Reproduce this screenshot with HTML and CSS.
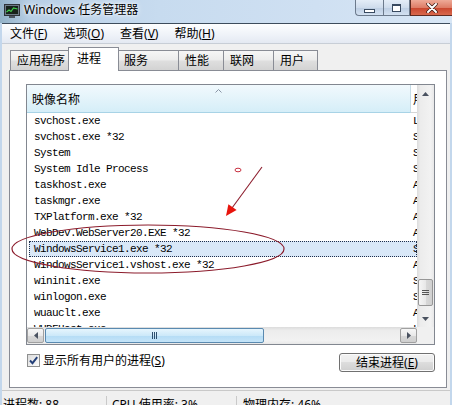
FILE: index.html
```html
<!DOCTYPE html>
<html lang="zh-CN">
<head>
  <meta charset="UTF-8" />
  <meta name="viewport" content="width=device-width, initial-scale=1.0">
  <title>Windows 任务管理器</title>
  <link rel="stylesheet" href="styles.css">
</head>
<body>
  <div class="window">
    <div class="titlebar">
      <svg class="app-icon" width="16" height="14" viewBox="0 0 16 14">
        <rect x="0.5" y="0.5" width="15" height="11" fill="#6d7a86" stroke="#2e3338"/>
        <rect x="2" y="2" width="12" height="8" fill="#17221a"/>
        <polyline points="2.5,8 5,6 7,7.5 9.5,4 13.5,5" fill="none" stroke="#3fd04a" stroke-width="1.2"/>
        <rect x="5" y="12" width="6" height="2" fill="#4b5560"/>
      </svg>
      <span class="title">Windows 任务管理器</span>
      <div class="caption-buttons">
        <div class="cap-btn cap-min"><span class="min-bar"></span></div>
        <div class="cap-btn cap-max"><span class="max-box"></span></div>
        <div class="cap-btn cap-close">
          <svg width="12" height="10" viewBox="0 0 12 10">
            <path d="M2 1 L10 9 M10 1 L2 9" stroke="#3a1a14" stroke-width="3.4" stroke-linecap="round"/>
            <path d="M2 1 L10 9 M10 1 L2 9" stroke="#fff" stroke-width="2" stroke-linecap="round"/>
          </svg>
        </div>
      </div>
    </div>

    <div class="client">
      <div class="menubar">
        <span class="menu-item">文件(<u>F</u>)</span>
        <span class="menu-item">选项(<u>O</u>)</span>
        <span class="menu-item">查看(<u>V</u>)</span>
        <span class="menu-item">帮助(<u>H</u>)</span>
      </div>

      <div class="tabs">
        <div class="tab tab-apps">应用程序</div>
        <div class="tab tab-proc active">进程</div>
        <div class="tab tab-svc">服务</div>
        <div class="tab tab-perf">性能</div>
        <div class="tab tab-net">联网</div>
        <div class="tab tab-user">用户</div>
      </div>

      <div class="tab-panel">
        <div class="listview">
          <div class="lv-main">
            <div class="lv-header">
              <div class="hd-col hd-name">
                <svg class="sort-arrow" width="7" height="4" viewBox="0 0 7 4">
                  <polyline points="0.5,3.5 3.5,0.5 6.5,3.5" fill="none" stroke="#8a96a6" stroke-width="1"/>
                </svg>
                <span class="hd-text">映像名称</span>
              </div>
              <div class="hd-col hd-user">用户名</div>
            </div>
            <div class="lv-rows">
              <div class="row"><span class="c-name">svchost.exe</span><span class="c-user">LOCAL SERVICE</span></div>
              <div class="row"><span class="c-name">svchost.exe *32</span><span class="c-user">SYSTEM</span></div>
              <div class="row"><span class="c-name">System</span><span class="c-user">SYSTEM</span></div>
              <div class="row"><span class="c-name">System Idle Process</span><span class="c-user">SYSTEM</span></div>
              <div class="row"><span class="c-name">taskhost.exe</span><span class="c-user">Administrator</span></div>
              <div class="row"><span class="c-name">taskmgr.exe</span><span class="c-user">Administrator</span></div>
              <div class="row"><span class="c-name">TXPlatform.exe *32</span><span class="c-user">Administrator</span></div>
              <div class="row"><span class="c-name">WebDev.WebServer20.EXE *32</span><span class="c-user">Administrator</span></div>
              <div class="row selected"><span class="c-name">WindowsService1.exe *32</span><span class="c-user">SYSTEM</span></div>
              <div class="row"><span class="c-name">WindowsService1.vshost.exe *32</span><span class="c-user">Administrator</span></div>
              <div class="row"><span class="c-name">wininit.exe</span><span class="c-user">SYSTEM</span></div>
              <div class="row"><span class="c-name">winlogon.exe</span><span class="c-user">SYSTEM</span></div>
              <div class="row"><span class="c-name">wuauclt.exe</span><span class="c-user">Administrator</span></div>
              <div class="row"><span class="c-name">WUDFHost.exe</span><span class="c-user">LOCAL SERVICE</span></div>
            </div>
          </div>

          <div class="vscroll">
            <div class="vs-btn">
              <svg width="7" height="4" viewBox="0 0 7 4"><polygon points="0,4 3.5,0 7,4" fill="#4a5260"/></svg>
            </div>
            <div class="vs-track">
              <div class="vs-thumb">
                <svg width="7" height="7" viewBox="0 0 7 7">
                  <path d="M0 1.5 H7 M0 3.5 H7 M0 5.5 H7" stroke="#555" stroke-width="1"/>
                </svg>
              </div>
            </div>
            <div class="vs-btn">
              <svg width="7" height="4" viewBox="0 0 7 4"><polygon points="0,0 3.5,4 7,0" fill="#4a5260"/></svg>
            </div>
          </div>

          <div class="hscroll">
            <div class="hs-btn">
              <svg width="4" height="7" viewBox="0 0 4 7"><polygon points="4,0 0,3.5 4,7" fill="#4a5260"/></svg>
            </div>
            <div class="hs-track">
              <div class="hs-thumb">
                <svg width="7" height="7" viewBox="0 0 7 7">
                  <path d="M1.5 0 V7 M3.5 0 V7 M5.5 0 V7" stroke="#2d4f6e" stroke-width="1"/>
                </svg>
              </div>
            </div>
            <div class="hs-btn">
              <svg width="4" height="7" viewBox="0 0 4 7"><polygon points="0,0 4,3.5 0,7" fill="#4a5260"/></svg>
            </div>
          </div>
          <div class="corner"></div>
        </div>

        <div class="panel-bottom">
          <label class="check">
            <span class="checkbox">
              <svg width="11" height="11" viewBox="0 0 11 11">
                <path d="M2 5.5 L4.5 8.2 L9.2 2.2" fill="none" stroke="#233f78" stroke-width="1.9"/>
              </svg>
            </span>
            显示所有用户的进程(<u>S</u>)
          </label>
          <button class="end-btn">结束进程(<u>E</u>)</button>
        </div>
      </div>

      <div class="statusbar">
        <span class="status-item st-count">进程数: 88</span>
        <span class="status-item st-cpu">CPU 使用率: 3%</span>
        <span class="status-item st-mem">物理内存: 46%</span>
      </div>
    </div>

    <svg class="annot" width="452" height="405" viewBox="0 0 452 405">
      <ellipse cx="148" cy="249" rx="136" ry="24" fill="none" stroke="#8c1c2c" stroke-width="1.2"/>
      <line x1="262" y1="167" x2="232" y2="208" stroke="#8c1c2c" stroke-width="1.1"/>
      <polygon points="226,216 228.4,204.2 236.6,210.1" fill="#e8140c"/>
      <ellipse cx="238" cy="170" rx="3" ry="1.8" fill="none" stroke="#c83040" stroke-width="1"/>
    </svg>
  </div>
</body>
</html>
```

FILE: styles.css
```css
body {
  margin: 0;
  width: 452px;
  height: 405px;
  overflow: hidden;
  background: #c3d7ec;
  font-family: "Noto Sans", "Noto Sans CJK SC", sans-serif;
  font-size: 12px;
  color: #000;
}
u { text-decoration: underline; }

.window {
  position: relative;
  height: 405px;
  display: flex;
  flex-direction: column;
}

/* title bar */
.titlebar {
  height: 23px;
  flex: none;
  display: flex;
  align-items: flex-start;
  background: linear-gradient(90deg, #93b2c8 0, #b8cfe6 7%, #c7dbef 35%, #cfe0f2 70%, #d8e6f5 100%);
}
.app-icon { margin: 4px 0 0 4px; }
.title {
  margin: 2px 0 0 4px;
  line-height: 16px;
  text-shadow: 0 0 6px #fff, 0 0 3px #fff;
}
.caption-buttons {
  margin-left: auto;
  display: flex;
  height: 16px;
}
.cap-btn {
  height: 16px;
  box-sizing: border-box;
  border: 1px solid #6c7a8c;
  border-top: none;
  display: flex;
  align-items: center;
  justify-content: center;
  background: linear-gradient(#e4edf7, #cfdcec 50%, #bccde2 51%, #d3e1f1);
}
.cap-min { width: 28px; border-radius: 0 0 0 4px; border-right: none; }
.cap-max { width: 27px; }
.cap-close {
  width: 42px;
  border-color: #5e2a20;
  border-right: none;
  background: linear-gradient(#eeaa98, #de7d67 50%, #c9452d 51%, #d8684d);
}
.min-bar {
  width: 9px;
  height: 2px;
  margin-top: 6px;
  background: #fff;
  border: 1px solid #394a60;
}
.max-box {
  width: 7px;
  height: 5px;
  border: 1px solid #394a60;
  border-top-width: 2px;
  background: #fff;
  box-shadow: inset 0 0 0 1px #fff;
}

/* client area */
.client {
  flex: 1;
  margin: 0 2px;
  background: #f0f0f0;
  display: flex;
  flex-direction: column;
}
.menubar {
  height: 19px;
  line-height: 19px;
  border-top: 1px solid #3d4c5c;
  border-bottom: 1px solid #c8ced6;
  background: linear-gradient(#fdfeff, #eef2f8 60%, #e4e9f2);
  display: flex;
}
.menu-item { padding: 0 8px; }

/* tabs */
.tabs {
  margin-top: 3px;
  height: 23px;
  padding-left: 8px;
  display: flex;
  align-items: flex-end;
}
.tab {
  height: 20px;
  line-height: 20px;
  box-sizing: border-box;
  padding-left: 6px;
  border: 1px solid #898c95;
  border-bottom: none;
  border-right: none;
  background: linear-gradient(#f6f6f6, #ececec 45%, #dedede 55%, #d3d3d3);
}
.tab-apps { width: 60px; }
.tab-proc { width: 51px; }
.tab-svc { width: 61px; }
.tab-perf { width: 45px; }
.tab-net { width: 50px; }
.tab-user { width: 45px; border-right: 1px solid #898c95; }
.tab.active {
  position: relative;
  z-index: 1;
  height: 24px;
  line-height: 22px;
  margin: 0 -2px -1px;
  padding-left: 8px;
  border-right: 1px solid #898c95;
  background: #fff;
}

.tab-panel {
  margin-left: 7px;
  width: 438px;
  height: 318px;
  box-sizing: border-box;
  border: 1px solid #898c95;
  background: #fff;
  padding: 13px 0 0 16px;
}

/* process list */
.listview {
  width: 409px;
  height: 261px;
  box-sizing: border-box;
  border: 1px solid #828790;
  display: grid;
  grid-template-columns: 390px 17px;
  grid-template-rows: 242px 17px;
}
.lv-main { overflow: hidden; }
.lv-header {
  display: flex;
  height: 28px;
}
.hd-col {
  box-sizing: border-box;
  height: 28px;
  border-bottom: 1px solid #d5d5d5;
  white-space: nowrap;
  overflow: hidden;
}
.hd-name {
  flex: none;
  width: 384px;
  display: flex;
  flex-direction: column;
  border-right: 1px solid #c5dbe6;
  border-bottom-color: #a8d3e6;
  background: linear-gradient(#f1f9fd, #e2f3fa 55%, #d5eef8);
}
.sort-arrow { align-self: center; margin-top: 4px; }
.hd-text {
  margin-top: -1px;
  padding-left: 5px;
  line-height: 16px;
}
.hd-user {
  flex: 1;
  padding: 7px 0 0 2px;
  line-height: 16px;
  background: #fff;
}

.row {
  display: flex;
  height: 16px;
  line-height: 16px;
  margin-left: 2px;
  font-family: "Liberation Mono", monospace;
  font-size: 11px;
  letter-spacing: -0.6px;
  white-space: nowrap;
}
.c-name {
  flex: none;
  width: 382px;
  padding-left: 5px;
  box-sizing: border-box;
}
.c-user { padding-left: 2px; }
.row.selected {
  background: #d9e8f8;
  outline: 1px dotted #1f2f4c;
  outline-offset: -1px;
}

/* vertical scrollbar */
.vscroll {
  display: flex;
  flex-direction: column;
  background: linear-gradient(90deg, #dcdcdc, #ececec 20%, #f2f2f2 80%, #e8e8e8);
}
.vs-btn {
  height: 17px;
  flex: none;
  display: flex;
  align-items: center;
  justify-content: center;
}
.vs-track { flex: 1; }
.vs-thumb {
  margin: 177px 0 0 1px;
  width: 15px;
  height: 27px;
  box-sizing: border-box;
  border: 1px solid #979797;
  border-radius: 2px;
  background: linear-gradient(90deg, #f6f6f6, #e8e8e8 50%, #d9d9d9 51%, #d0d0d0);
  display: flex;
  align-items: center;
  justify-content: center;
}

/* horizontal scrollbar */
.hscroll {
  display: flex;
  background: linear-gradient(#dcdcdc, #ececec 20%, #f2f2f2 80%, #e8e8e8);
}
.hs-btn {
  width: 17px;
  flex: none;
  margin: 1px 0;
  box-sizing: border-box;
  border: 1px solid #a0a0a0;
  border-radius: 2px;
  background: linear-gradient(#f7f7f7, #e9e9e9 50%, #d8d8d8 51%, #cfcfcf);
  display: flex;
  align-items: center;
  justify-content: center;
}
.hs-track { flex: 1; display: flex; }
.hs-thumb {
  margin: 1px 0 1px 1px;
  width: 219px;
  box-sizing: border-box;
  border: 1px solid #5a8ab0;
  border-radius: 2px;
  background: linear-gradient(#e6f5fd, #cde9f9 50%, #b4dcf5 51%, #c4e4f8);
  display: flex;
  align-items: center;
  justify-content: center;
}
.corner { background: #f0f0f0; }

/* checkbox + button row */
.panel-bottom {
  width: 409px;
  margin-top: 8px;
  display: flex;
  justify-content: space-between;
  align-items: flex-start;
}
.check {
  display: flex;
  align-items: center;
  margin: 1px 0 0 1px;
  line-height: 13px;
}
.checkbox {
  width: 13px;
  height: 13px;
  box-sizing: border-box;
  border: 1px solid #8e8f8f;
  background: linear-gradient(135deg, #dcdcdc, #fbfbfb);
  margin-right: 3px;
  display: flex;
  align-items: center;
  justify-content: center;
}
.end-btn {
  width: 96px;
  height: 19px;
  padding: 0;
  font-family: inherit;
  font-size: 12px;
  line-height: 17px;
  color: #000;
  border: 1px solid #707070;
  border-radius: 3px;
  background: linear-gradient(#f2f2f2, #ebebeb 45%, #dddddd 50%, #cfcfcf);
  box-shadow: inset 0 0 0 1px #fbfbfb;
}

/* status bar */
.statusbar {
  margin-top: 2px;
  flex: 1;
  border-top: 1px solid #c9c9c9;
  display: flex;
  padding-top: 5px;
  line-height: 18px;
}
.status-item {
  box-sizing: border-box;
  white-space: nowrap;
}
.st-count { width: 105px; padding-left: 1px; border-right: 1px solid #c9c9c9; }
.st-cpu { width: 130px; padding-left: 5px; border-right: 1px solid #c9c9c9; }
.st-mem { padding-left: 6px; }

/* red marks drawn over the screenshot */
.annot {
  position: absolute;
  top: 0;
  left: 0;
  pointer-events: none;
}
```
